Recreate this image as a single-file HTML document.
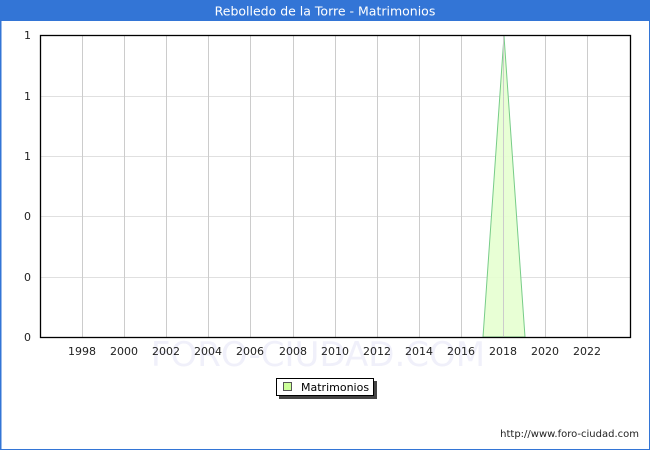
<!DOCTYPE html>
<html><head><style>
body{margin:0;width:650px;height:450px;overflow:hidden;background:#fff;font-family:"DejaVu Sans","Liberation Sans",sans-serif;}
</style></head><body>
<svg width="650" height="450" xmlns="http://www.w3.org/2000/svg" style="position:absolute;left:0;top:0">
<rect x="0.5" y="0.5" width="649" height="449" fill="#fff" stroke="#3375d6" stroke-width="1"/>
<rect x="0" y="0" width="650" height="21" fill="#3375d6"/>
<rect x="0" y="0" width="1.5" height="450" fill="#3375d6"/>
<text x="325" y="15.5" text-anchor="middle" fill="#fff" font-size="12.5" font-family="DejaVu Sans,sans-serif">Rebolledo de la Torre - Matrimonios</text>
<text x="318" y="366" text-anchor="middle" fill="#f0f0fa" font-size="34" font-family="DejaVu Sans,sans-serif">FORO-CIUDAD.COM</text>
<g stroke="#e0e0e0" stroke-width="1">
<line x1="40" y1="96.5" x2="631" y2="96.5"/>
<line x1="40" y1="156.5" x2="631" y2="156.5"/>
<line x1="40" y1="216.5" x2="631" y2="216.5"/>
<line x1="40" y1="277.5" x2="631" y2="277.5"/>
</g>
<g stroke="#cccccc" stroke-width="1">
<line x1="82.5" y1="35" x2="82.5" y2="337"/><line x1="124.5" y1="35" x2="124.5" y2="337"/>
<line x1="166.5" y1="35" x2="166.5" y2="337"/><line x1="208.5" y1="35" x2="208.5" y2="337"/>
<line x1="250.5" y1="35" x2="250.5" y2="337"/><line x1="293.5" y1="35" x2="293.5" y2="337"/>
<line x1="335.5" y1="35" x2="335.5" y2="337"/><line x1="377.5" y1="35" x2="377.5" y2="337"/>
<line x1="419.5" y1="35" x2="419.5" y2="337"/><line x1="461.5" y1="35" x2="461.5" y2="337"/>
<line x1="503.5" y1="35" x2="503.5" y2="337"/><line x1="545.5" y1="35" x2="545.5" y2="337"/>
<line x1="587.5" y1="35" x2="587.5" y2="337"/>
</g>
<polygon points="483,337 504,36 525,337" fill="#e6ffd0" fill-opacity="0.9" stroke="#77cc88" stroke-width="1"/>
<line x1="503.5" y1="36" x2="503.5" y2="337" stroke="#cccccc"/>
<rect x="40.5" y="35.5" width="590" height="302" fill="none" stroke="#000" stroke-width="1.3"/>
<g font-size="11" fill="#222" text-anchor="end">
<text x="31" y="39">1</text><text x="31" y="100">1</text><text x="31" y="160">1</text>
<text x="31" y="220">0</text><text x="31" y="281">0</text><text x="31" y="341">0</text>
</g>
<g font-size="11" fill="#222" text-anchor="middle">
<text x="82" y="355">1998</text><text x="124" y="355">2000</text><text x="166" y="355">2002</text>
<text x="208" y="355">2004</text><text x="250" y="355">2006</text><text x="293" y="355">2008</text>
<text x="335" y="355">2010</text><text x="377" y="355">2012</text><text x="419" y="355">2014</text>
<text x="461" y="355">2016</text><text x="503" y="355">2018</text><text x="545" y="355">2020</text>
<text x="587" y="355">2022</text>
</g>
<rect x="279" y="381" width="98" height="18" fill="#444"/>
<rect x="276.5" y="378.5" width="97" height="17" fill="#fff" stroke="#000" stroke-width="1"/>
<rect x="283.5" y="382.5" width="8" height="8" fill="#ccff99" stroke="#555"/>
<text x="301" y="391" font-size="11" fill="#000">Matrimonios</text>
<text x="639" y="437" text-anchor="end" font-size="10" fill="#222">http://www.foro-ciudad.com</text>
</svg>
</body></html>
